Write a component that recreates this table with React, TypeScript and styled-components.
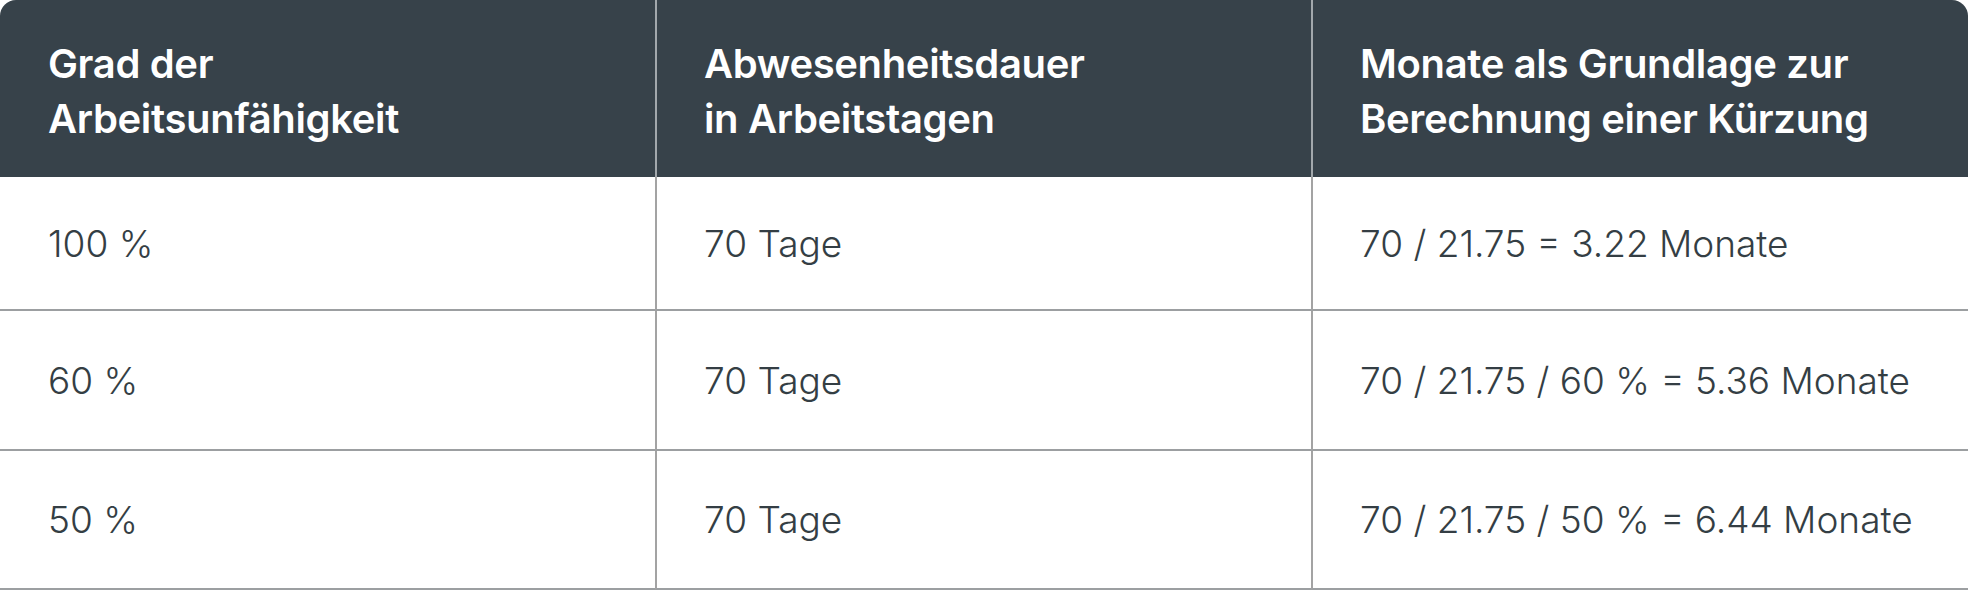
import React from "react";
import styled, { createGlobalStyle } from "styled-components";

const Global = createGlobalStyle`
  html, body { margin: 0; padding: 0; background: #ffffff; }
  body { font-family: Inter, "Noto Sans", "Liberation Sans", sans-serif; }
`;

const Table = styled.div`
  width: 1968px;
  display: grid;
  grid-template-columns: 655px 656px 657px;
`;

const HeadCell = styled.div<{ $first?: boolean; $last?: boolean }>`
  height: 177px;
  box-sizing: border-box;
  padding: 36px 40px 0 ${(p) => (p.$first ? "48px" : "47px")};
  background: #37424a;
  color: #ffffff;
  font-weight: 600;
  font-size: 40px;
  line-height: 55px;
  letter-spacing: -0.35px;
  border-left: ${(p) => (p.$first ? "none" : "2px solid #a2a8ac")};
  border-top-left-radius: ${(p) => (p.$first ? "16px" : "0")};
  border-top-right-radius: ${(p) => (p.$last ? "16px" : "0")};
`;

const Cell = styled.div<{ $first?: boolean; $h: number }>`
  height: ${(p) => p.$h}px;
  box-sizing: border-box;
  display: flex;
  align-items: center;
  padding: 0 40px 0 ${(p) => (p.$first ? "48px" : "47px")};
  color: #343e44;
  font-weight: 300;
  font-size: 37px;
  border-left: ${(p) => (p.$first ? "none" : "2px solid #a3a3a3")};
  border-bottom: 2px solid #9c9fa1;
`;

const heads = [
  ["Grad der", "Arbeitsunfähigkeit"],
  ["Abwesenheitsdauer", "in Arbeitstagen"],
  ["Monate als Grundlage zur", "Berechnung einer Kürzung"],
];

const rows = [
  { h: 134, cells: ["100 %", "70 Tage", "70 / 21.75 = 3.22 Monate"] },
  { h: 140, cells: ["60 %", "70 Tage", "70 / 21.75 / 60 % = 5.36 Monate"] },
  { h: 139, cells: ["50 %", "70 Tage", "70 / 21.75 / 50 % = 6.44 Monate"] },
];

export default function App() {
  return (
    <>
      <Global />
      <Table>
        {heads.map((h, i) => (
          <HeadCell key={i} $first={i === 0} $last={i === 2}>
            {h[0]}
            <br />
            {h[1]}
          </HeadCell>
        ))}
        {rows.map((r, ri) =>
          r.cells.map((c, ci) => (
            <Cell key={`${ri}-${ci}`} $first={ci === 0} $h={r.h}>
              {c}
            </Cell>
          ))
        )}
      </Table>
    </>
  );
}
